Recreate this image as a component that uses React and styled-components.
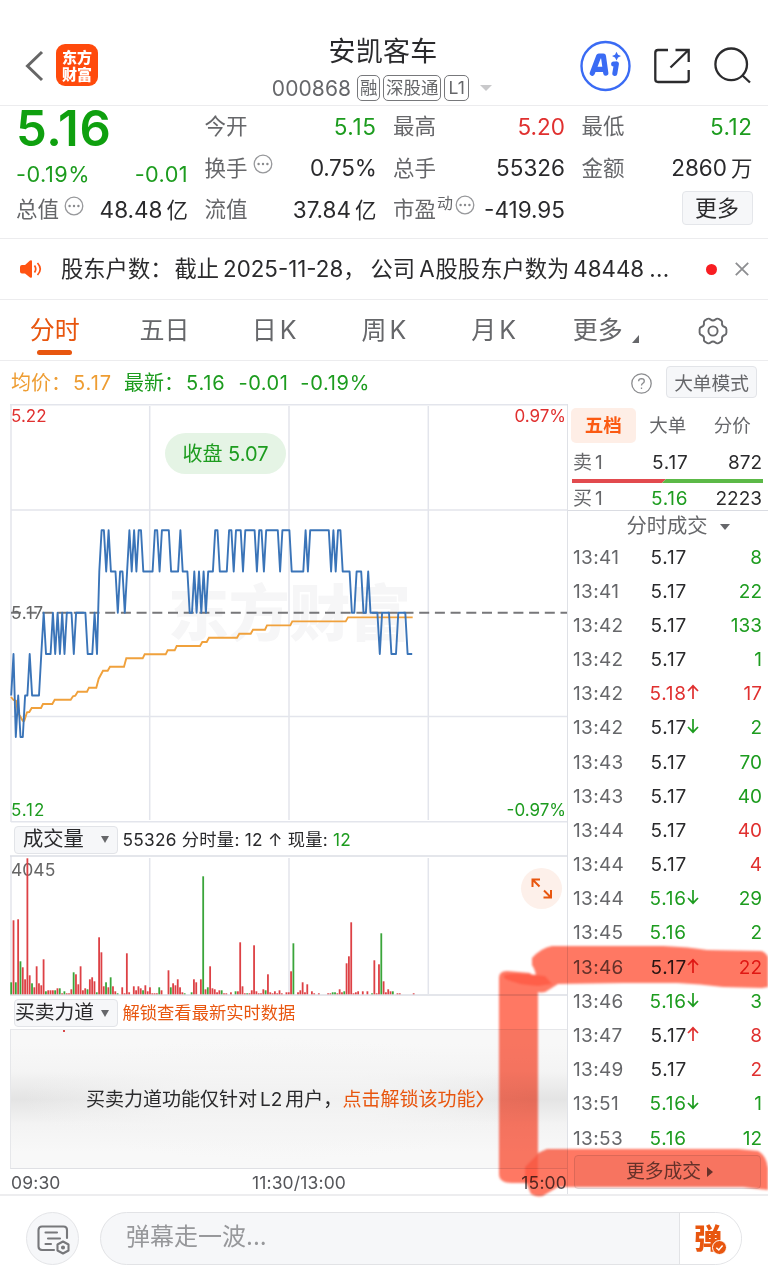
import React from "react";
import styled, { createGlobalStyle } from "styled-components";

const C = {
  green: "#1d9c1f",
  red: "#e0302f",
  orange: "#e8560f",
  amber: "#ee9d33",
  ink: "#2a2a2c",
  gray: "#66676a",
  line: "#ececee",
  grid: "#e3e5ec",
  chip: "#f6f7f9",
};

const GlobalStyle = createGlobalStyle`
  * { box-sizing: border-box; }
  body {
    margin: 0;
    background: #fff;
    color: ${C.ink};
    font-family: Inter, "Noto Sans CJK SC", sans-serif;
    line-height: 1;
  }
`;

const Page = styled.div`
  position: relative;
  width: 768px;
  height: 1273px;
  overflow: hidden;
  background: #fff;
  white-space: nowrap;
`;

const Txt = styled.span`
  color: ${(p) => p.$c || "inherit"};
  font-size: ${(p) => (p.$s ? `${p.$s}px` : "inherit")};
  letter-spacing: ${(p) => p.$ls || 0}px;
  margin-left: ${(p) => p.$ml || 0}px;
  font-weight: ${(p) => p.$w || "inherit"};
`;

/* ---------- header ---------- */
const Header = styled.header`
  display: grid;
  grid-template-columns: 190px 1fr 190px;
  height: 106px;
  border-bottom: 1.5px solid ${C.line};
`;
const HeaderLeft = styled.div`
  display: flex;
  align-items: flex-start;
  padding: 44px 0 0 23px;
  gap: 11px;
`;
const Logo = styled.div`
  display: flex;
  flex-direction: column;
  align-items: center;
  width: 42px;
  height: 42px;
  border-radius: 9px;
  background: #ff4a0c;
  color: #fff;
  font: 900 15px/17px "Noto Sans CJK SC", sans-serif;
  padding-top: 4px;
`;
const HeaderMid = styled.div`
  display: flex;
  flex-direction: column;
  align-items: center;
  padding-top: 37px;
`;
const Title = styled.div`
  font-size: 27px;
  line-height: 30px;
  letter-spacing: 0.2px;
  margin-left: -2px;
`;
const SubLine = styled.div`
  display: flex;
  align-items: center;
  height: 26px;
  margin-top: 8px;
  margin-left: -4px;
  color: ${C.gray};
`;
const Tag = styled.span`
  height: 26px;
  line-height: 23px;
  width: ${(p) => p.$w}px;
  text-align: center;
  border: 1.3px solid #77787b;
  border-radius: 5px;
  font-size: 17.5px;
  margin-left: ${(p) => p.$ml}px;
`;
const DownTri = styled.i`
  width: 0;
  height: 0;
  margin-left: ${(p) => p.$ml || 0}px;
  border: ${(p) => p.$r}px solid transparent;
  border-top: ${(p) => p.$h}px solid ${(p) => p.$c};
  border-bottom: 0;
`;
const HeaderRight = styled.div`
  display: flex;
  align-items: flex-start;
  padding-top: 40px;
`;

/* ---------- quote ---------- */
const Quote = styled.section`
  display: grid;
  grid-template-columns: 172px 172px 172px 171px;
  column-gap: 16.5px;
  padding: 0 15px 0 16px;
  height: 133px;
  border-bottom: 1.5px solid ${C.line};
`;
const QuoteCol = styled.div`
  display: flex;
  flex-direction: column;
`;
const Price = styled.div`
  height: 47px;
  line-height: 45px;
  font-size: 49px;
  font-weight: 600;
  letter-spacing: 0.6px;
  color: #0fa00f;
`;
const Cell = styled.div`
  display: flex;
  justify-content: space-between;
  align-items: center;
  height: ${(p) => p.$h || 41.5}px;
  font-size: 22.5px;
  color: ${(p) => p.$c || C.ink};
`;
const Label = styled.span`
  display: flex;
  align-items: center;
  color: ${C.gray};
  font-size: 21.5px;
  gap: 5px;
`;
const Sup = styled.span`
  font-size: 16px;
  margin: -13px -3px 0 -4px;
`;
const MoreBtn = styled.button`
  width: 71px;
  height: 34px;
  margin: 2px 0 0 auto;
  padding: 0;
  border: 1.5px solid #e4e6ea;
  border-radius: 4px;
  background: ${C.chip};
  color: ${C.ink};
  font: 22px/30px Inter, "Noto Sans CJK SC", sans-serif;
`;

/* ---------- notice ---------- */
const Notice = styled.section`
  display: flex;
  align-items: center;
  height: 61px;
  padding-left: 19px;
  border-bottom: 1.5px solid ${C.line};
  font-size: 22.3px;
`;
const NoticeText = styled.div`
  width: 625px;
  margin-left: 18px;
`;
const RedDot = styled.i`
  width: 11px;
  height: 11px;
  border-radius: 50%;
  background: #f81d22;
  margin: 0 18px 0 20px;
`;

/* ---------- tabs ---------- */
const Tabs = styled.nav`
  display: grid;
  grid-template-columns: repeat(7, 109.7px);
  height: 61px;
  border-bottom: 1.5px solid ${C.line};
`;
const Tab = styled.div`
  display: flex;
  flex-direction: column;
  align-items: center;
  padding-top: 16.5px;
  font-size: 25px;
  line-height: 27px;
  color: ${(p) => (p.$on ? C.orange : C.gray)};
  &::after {
    content: "";
    display: ${(p) => (p.$on ? "block" : "none")};
    width: 35px;
    height: 5px;
    border-radius: 3px;
    margin-top: 6.5px;
    background: ${C.orange};
  }
`;
const TabRow = styled.div`
  display: flex;
  gap: 9px;
  align-items: flex-end;
  margin-left: 5px;
`;

/* ---------- info ---------- */
const Info = styled.section`
  display: flex;
  align-items: center;
  height: 43px;
  padding: 1px 11px 0;
  font-size: 20px;
  color: ${C.green};
`;
const ModeBtn = styled.button`
  width: 91px;
  height: 32px;
  margin: -2px 0 0 14px;
  padding: 0;
  border: 1.5px solid #e2e4e8;
  border-radius: 4px;
  background: ${C.chip};
  color: ${C.gray};
  font: 18.7px/28px "Noto Sans CJK SC", sans-serif;
`;
const Spacer = styled.div`
  flex: 1;
`;

/* ---------- body ---------- */
const Body = styled.main`
  display: flex;
  height: 792px;
  border-bottom: 2px solid #ededef;
`;
const ChartCol = styled.div`
  display: flex;
  flex-direction: column;
  width: 568px;
  padding-left: 10px;
  border-right: 1px solid #dfe1e6;
`;
const ChartBox = styled.div`
  position: relative;
  height: ${(p) => p.$h}px;
  svg { display: block; }
`;
const ClosePill = styled.div`
  position: absolute;
  left: 155px;
  top: 29px;
  width: 121px;
  height: 41px;
  border-radius: 21px;
  background: #e5f4e5;
  color: ${C.green};
  font-size: 20px;
  line-height: 42px;
  text-align: center;
`;
const ExpandBtn = styled.div`
  position: absolute;
  left: 511px;
  top: 13px;
  width: 41px;
  height: 41px;
  border-radius: 50%;
  background: #fdf0ea;
`;
const SubHead = styled.div`
  display: flex;
  align-items: center;
  height: ${(p) => p.$h}px;
  padding: 1px 0 0 4px;
  font-size: 17.3px;
`;
const Picker = styled.div`
  display: flex;
  align-items: center;
  justify-content: space-between;
  width: 104px;
  height: 28px;
  padding: 0 8px 0 ${(p) => p.$pl}px;
  margin-right: 4.5px;
  border: 1.5px solid #e2e4e8;
  border-radius: 4px;
  background: ${C.chip};
  font-size: ${(p) => p.$s}px;
`;
const LockPanel = styled.div`
  position: relative;
  display: flex;
  align-items: center;
  height: 140px;
  padding-left: 75px;
  border: 1px solid #e6e7ea;
  border-right: 0;
  border-bottom: 1.5px solid #dfe0e4;
  font-size: 19px;
  background:
    radial-gradient(ellipse 46% 45% at 48% 50%, rgba(245, 245, 245, 0.75) 45%, rgba(245, 245, 245, 0) 100%),
    linear-gradient(#f8f8f8 10%, #f4f4f4 30%, #e4e4e4 50%, #f3f3f3 68%, #f8f8f8 88%);
  &::before {
    content: "";
    position: absolute;
    left: 52px;
    top: 0;
    width: 2px;
    height: 2px;
    background: #d8484a;
  }
`;
const Axis = styled.div`
  display: grid;
  grid-template-columns: 1fr 1fr 1fr;
  height: 25px;
  align-items: center;
  padding: 3px 0 0 1px;
  font-size: 17.5px;
  letter-spacing: 0.15px;
  color: #55565a;
  span:nth-child(2) { text-align: center; padding-left: 20px; }
  span:nth-child(3) { text-align: right; }
`;

/* ---------- order panel ---------- */
const Side = styled.aside`
  width: 200px;
  display: flex;
  flex-direction: column;
`;
const SideTabs = styled.div`
  display: flex;
  align-items: center;
  height: 42px;
  padding-left: 3px;
`;
const SideTab = styled.div`
  width: 64.5px;
  height: 35px;
  line-height: 35px;
  text-align: center;
  border-radius: 5px;
  font-size: 18.5px;
  font-weight: ${(p) => (p.$on ? 700 : 400)};
  color: ${(p) => (p.$on ? "#fb5a12" : C.gray)};
  background: ${(p) => (p.$on ? "#feeee6" : "transparent")};
`;
const Row = styled.div`
  display: grid;
  grid-template-columns: 77px 60px 1fr;
  align-items: center;
  height: ${(p) => p.$h}px;
  padding: ${(p) => p.$pt || 0}px 6px 0 5px;
  font-size: 19px;
`;
const Cellr = styled.span`
  color: ${(p) => p.$c || C.ink};
  text-align: ${(p) => (p.$r ? "right" : "left")};
  margin-left: ${(p) => p.$ml || 0}px;
  letter-spacing: ${(p) => p.$ls || 0}px;
`;
const SideTitle = styled.div`
  display: flex;
  align-items: center;
  height: 30px;
  padding: 2px 0 0 58.5px;
  font-size: 20.3px;
  color: ${C.gray};
  border-top: 1.5px solid #dadce2;
`;
const MoreDeals = styled.div`
  display: flex;
  align-items: center;
  justify-content: center;
  gap: 6px;
  width: 187px;
  height: 34px;
  margin: 0 0 0 6px;
  padding-left: 4px;
  border: 1px solid #dcdcdf;
  border-radius: 4px;
  background: #f7f7f8;
  font-size: 18.8px;
  color: ${C.gray};
`;

/* ---------- bottom bar ---------- */
const Bottom = styled.footer`
  display: flex;
  align-items: center;
  height: 77px;
  padding: 8px 0 0 26px;
  gap: 21px;
`;
const RoundBtn = styled.div`
  width: 53px;
  height: 53px;
  border-radius: 50%;
  border: 1.5px solid #e4e5e8;
  background: ${C.chip};
`;
const InputBox = styled.div`
  display: flex;
  width: 642px;
  height: 53px;
  border: 1.5px solid #e2e3e6;
  border-radius: 27px;
  background: ${C.chip};
  overflow: hidden;
  font-size: 24px;
  line-height: 47px;
  color: #97989b;
`;
const Placeholder = styled.div`
  flex: 1;
  padding-left: 25px;
`;
const SendBox = styled.div`
  position: relative;
  width: 62px;
  border-left: 1.5px solid #e2e3e6;
  background: #fff;
  color: ${C.orange};
  font: 900 28px/49px "Noto Sans CJK SC", sans-serif;
  padding-left: 14px;
  svg { position: absolute; left: 32px; top: 27px; }
`;
const Marker = styled.svg`
  position: absolute;
  left: 490px;
  top: 930px;
  mix-blend-mode: multiply;
`;

/* ---------- data ---------- */
const LEVEL_Y = { 4: 737, 5: 695.5, 6: 654, 7: 612.7, 8: 571.5, 9: 530.3 };
/* one "level x minutes" run per token */
const RUNS =
  "5 6 4 5 4x2 5x2 6 5x4 6 7 6x3 7 6 7 6 7 6 7x3 6 7x5 6x3 7 6 8 9x2 8 9 8x3 7 8x2 7 8 9 8 9 8 9x2 8x5 9x2 8 9x4 8x4 9 8x3 7x2 8 7 8 7 8 7 8x3 9x2 8x4 9x2 8 9x3 8 9x5 8 9x2 8 9x6 8 9x4 8x6 9 8 9x9 8 9 8 9x2 8x4 7x2 8x3 7x2 8 7x4 6 7x4 6x3 7x4 6x3";
const STEP = 2.318;
const pricePoints = RUNS.split(" ")
  .flatMap((t) => {
    const [l, n] = t.split("x");
    return Array(Number(n || 1)).fill(LEVEL_Y[l]);
  })
  .map((y, i) => `${(11.2 + i * STEP).toFixed(1)},${y}`)
  .join(" ");

const AVG =
  "11,697 13.5,700 16,700.7 18,713 20,716 22.7,720.7 24.3,720.7 27,712.3 29.3,712 31.7,708 41,708 43,704 52.3,704 54.7,699.7 70.7,699.7 73,696.3 75.3,695.7 77.7,691.7 87,691.7 89,687.7 96.3,687.7 98.7,678.7 103,670.7 107.7,670.7 110,666.7 124,666.7 126.3,658.3 142.7,658.3 144.7,654.3 165.7,654.3 167.7,650.3 174.7,650.3 176.7,646 200,646 202.3,642 206.7,642 209,637.7 237,637.7 239.3,633.7 250.7,633.7 253,629.7 265,629.7 267,625.4 290.3,625.4 292.3,621.4 345.7,621.4 348,617.4 412.7,617.4";

const VOL =
  "g12 r74 g12 r75 g33 r27 r15 r136 r19 g11 r7 r28 r11 r9 r35 g3 r4 r4 r4 g4 r6 g6 r1 g3 r1 r1 r5 g22 r20 r10 r28 r4 r6 g5 r15 r17 r13 g2 r57 r42 r8 g12 r7 g17 r8 r3 g1 r0 r7 r1 r41 r2 r0 r8 r4 r8 r6 g4 r9 r3 r7 r1 r1 r1 g7 r4 r0 r0 r24 g7 r11 r9 r15 r7 r2 g1 r0 r0 g2 r15 r12 r0 r15 g118 r5 g7 r28 r6 r5 r2 r4 g4 r1 r1 r0 r2 r0 g3 r3 r52 r8 r1 g1 r1 r4 r49 r3 r1 r1 r5 g4 r20 r2 r1 r3 r1 r4 r1 r0 r2 r2 r23 g51 r0 r2 r4 r12 r2 r10 r0 r3 r1 r0 r1 r0 r0 r0 r1 r1 g2 g2 r1 r5 r2 g3 r31 r38 r72 r1 r2 r3 r0 r3 r0 r3 r0 g1 r34 r1 r30 g61 r13 r2 r5 r3 g3 r0 r1 r1 r0 r0 r0 r0 r0 r1";

const DEALS = [
  ["13:41", "5.17", "", "8", "g"],
  ["13:41", "5.17", "", "22", "g"],
  ["13:42", "5.17", "", "133", "g"],
  ["13:42", "5.17", "", "1", "g"],
  ["13:42", "5.18", "u", "17", "r", "r"],
  ["13:42", "5.17", "d", "2", "g"],
  ["13:43", "5.17", "", "70", "g"],
  ["13:43", "5.17", "", "40", "g"],
  ["13:44", "5.17", "", "40", "r"],
  ["13:44", "5.17", "", "4", "r"],
  ["13:44", "5.16", "d", "29", "g", "g"],
  ["13:45", "5.16", "", "2", "g", "g"],
  ["13:46", "5.17", "u", "22", "r"],
  ["13:46", "5.16", "d", "3", "g", "g"],
  ["13:47", "5.17", "u", "8", "r"],
  ["13:49", "5.17", "", "2", "r"],
  ["13:51", "5.16", "d", "1", "g", "g"],
  ["13:53", "5.16", "", "12", "g", "g"],
];
const tone = { g: C.green, r: C.red };

const MoreDots = () => (
  <svg width="20" height="20" style={{ marginTop: -9 }} viewBox="0 0 20 20" fill="none">
    <circle cx="10" cy="10" r="8.8" stroke="#97989b" strokeWidth="1.3" />
    <g fill="#88898c">
      <circle cx="5.6" cy="10" r="1.2" />
      <circle cx="10" cy="10" r="1.2" />
      <circle cx="14.4" cy="10" r="1.2" />
    </g>
  </svg>
);

const Arrow = ({ dir }) => (
  <svg width="12" height="16" viewBox="0 0 12 16" fill="none" stroke={dir === "u" ? C.red : C.green} strokeWidth="1.7">
    {dir === "u" ? <path d="M6 15V2M1 7L6 1.8L11 7" /> : <path d="M6 1V14M1 9L6 14.2L11 9" />}
  </svg>
);

const PriceChart = () => (
  <svg width="557" height="419" viewBox="10 404 557 419" fill="none">
    <text x="168" y="636" fontSize="61" fontWeight="900" fill="#f6f6f7" textLength="243" fontFamily="Noto Sans CJK SC">
      东方财富
    </text>
    <g stroke={C.grid} strokeWidth="1.5">
      <path d="M11 405V822M149.7 406V820M289 406V820M428.3 406V820" />
      <path d="M10 404.8H567M11 510H567M11 716.5H567M11 821.8H567" />
    </g>
    <path d="M11 612.8H567" stroke="#77777a" strokeWidth="2" strokeDasharray="10 5.7" />
    <polyline points={AVG} stroke="#f0a13c" strokeWidth="1.9" />
    <polyline points={pricePoints} stroke="#3a74b8" strokeWidth="1.9" strokeLinejoin="round" />
    <g fontSize="17" fontFamily="Inter">
      <text x="11" y="421.5" fill={C.red}>5.22</text>
      <text x="11" y="619" fill="#666" letterSpacing="0.8">5.17</text>
      <text x="11" y="815.5" fill={C.green} letterSpacing="0.9">5.12</text>
      <text x="566" y="421.5" fill={C.red} textAnchor="end">0.97%</text>
      <text x="566" y="815.5" fill={C.green} textAnchor="end">-0.97%</text>
    </g>
  </svg>
);

const VolumeChart = () => (
  <svg width="557" height="141" viewBox="10 855 557 141">
    <g stroke={C.grid} strokeWidth="1.5">
      <path d="M11 856V995M149.7 858V994M289 858V994M428.3 858V994" />
      <path d="M10 856H567M10 995H567" stroke="#dcdee5" />
    </g>
    <text x="11" y="875.5" fontSize="17.5" fill="#666" fontFamily="Inter">4045</text>
    {VOL.split(" ").map((t, i) => {
      const h = Number(t.slice(1));
      return h ? (
        <rect
          key={i}
          x={10.3 + i * 2.313}
          y={994.3 - h}
          width="1.8"
          height={h}
          fill={t[0] === "g" ? "#3aa53a" : "#dd4145"}
        />
      ) : null;
    })}
  </svg>
);

export default function App() {
  return (
    <Page>
      <GlobalStyle />
      <Header>
        <HeaderLeft>
          <svg width="22" height="42" fill="none" stroke="#666" strokeWidth="3">
            <path d="M19 8L4.5 22L19 36" />
          </svg>
          <Logo><span>东方</span><span>财富</span></Logo>
        </HeaderLeft>
        <HeaderMid>
          <Title>安凯客车</Title>
          <SubLine>
            <Txt $s={21} $ls={0.1}>000868</Txt>
            <Tag $w={23} $ml={6}>融</Tag>
            <Tag $w={58} $ml={3}>深股通</Tag>
            <Tag $w={25} $ml={3}>L1</Tag>
            <DownTri $ml={11} $r={6} $h={6.5} $c="#c9c9cb" />
          </SubLine>
        </HeaderMid>
        <HeaderRight>
          <svg width="190" height="52" viewBox="578 40 190 52" fill="none">
            <circle cx="605.5" cy="66" r="24" stroke="#3a6bf4" strokeWidth="2.4" />
            <g stroke="#3a6bf4" strokeLinejoin="round" strokeLinecap="round">
              <path d="M592.3 73.2L598.8 56H603.4L605.8 73.2M595 69.3H603" strokeWidth="5.2" />
              <path d="M616.4 64L614.8 73.5M613.6 64H616" strokeWidth="5" />
            </g>
            <path d="M616.5 51.8L618 54.7L621 56L618 57.4L616.5 60.4L615 57.4L612 56L615 54.7Z" fill="#3a6bf4" />
            <g stroke="#2b2b2d" strokeWidth="2.3">
              <path d="M668 50H658Q655.3 50 655.3 52.7V79.3Q655.3 82 658 82H686Q688.7 82 688.7 79.3V70" />
              <path d="M675.5 50H688.7V62M688 50.5L670.5 67.5" />
              <circle cx="731.2" cy="64.3" r="15.8" />
              <path d="M742.5 75.5L750 82.5" />
            </g>
          </svg>
        </HeaderRight>
      </Header>

      <Quote>
        <QuoteCol>
          <Price>5.16</Price>
          <Cell $h={43} $c={C.green}>
            <Txt $s={21.7} $ls={0.5}>-0.19%</Txt>
            <Txt $s={21.7} $ls={0.4}>-0.01</Txt>
          </Cell>
          <Cell $h={28}>
            <Label>总值<MoreDots /></Label>
            <span>48.48<Txt $s={21.5} $ml={4}>亿</Txt></span>
          </Cell>
        </QuoteCol>
        <QuoteCol>
          <Cell>
            <Label>今开</Label><Txt $c={C.green} $ls={0.6}>5.15</Txt>
          </Cell>
          <Cell>
            <Label>换手<MoreDots /></Label><Txt $ls={-0.3}>0.75%</Txt>
          </Cell>
          <Cell>
            <Label>流值</Label><span>37.84<Txt $s={21.5} $ml={4}>亿</Txt></span>
          </Cell>
        </QuoteCol>
        <QuoteCol>
          <Cell>
            <Label>最高</Label><Txt $c={C.red}>5.20</Txt>
          </Cell>
          <Cell>
            <Label>总手</Label><span>55326</span>
          </Cell>
          <Cell>
            <Label>市盈<Sup>动</Sup><MoreDots /></Label><span>-419.95</span>
          </Cell>
        </QuoteCol>
        <QuoteCol>
          <Cell>
            <Label>最低</Label><Txt $c={C.green} $ls={0.5}>5.12</Txt>
          </Cell>
          <Cell>
            <Label>金额</Label><span>2860<Txt $s={21.5} $ml={4}>万</Txt></span>
          </Cell>
          <MoreBtn>更多</MoreBtn>
        </QuoteCol>
      </Quote>

      <Notice>
        <svg width="24" height="20" viewBox="0 0 24 20" fill="none">
          <path d="M1 8Q1 6 3 6H6L11 1.5Q13 .5 13 2.5V17.5Q13 19.5 11 18.5L6 14.5H3Q1 14.5 1 12.5Z" fill="#ff5312" />
          <path d="M15.5 6.5Q18 10 15.5 13.5M18.5 4Q24 10 18.5 16" stroke="#ff5312" strokeWidth="1.7" />
        </svg>
        <NoticeText>
          股东户数：<Txt $ml={2}>截止</Txt><Txt $ml={4}>2025-11-28</Txt>，<Txt $ml={5}>公司</Txt><Txt $ml={4}>A</Txt>
          <Txt $ml={1}>股股东户数为</Txt><Txt $ml={4}>48448</Txt><Txt $ml={5} $ls={0.4}>...</Txt>
        </NoticeText>
        <RedDot />
        <svg width="14" height="14" stroke="#8d8e91" strokeWidth="1.8"><path d="M.8 .8L13.2 13.2M13.2 .8L.8 13.2" /></svg>
      </Notice>

      <Tabs>
        <Tab $on>分时</Tab>
        <Tab>五日</Tab>
        <Tab><span>日<Txt $ml={3}>K</Txt></span></Tab>
        <Tab><span>周<Txt $ml={3}>K</Txt></span></Tab>
        <Tab><span>月<Txt $ml={3}>K</Txt></span></Tab>
        <Tab>
          <TabRow>
            更多
            <svg width="7" height="10" fill="#66676a"><path d="M7 1V9H0Z" /></svg>
          </TabRow>
        </Tab>
        <Tab>
          <svg width="30" height="28" viewBox="-15 -14 30 28" fill="none" stroke="#66676a" strokeWidth="1.9" strokeLinejoin="round">
            <path d="M-5.5 -12.2Q-3.5 -12.8 -2.4 -11.4Q0 -9.4 2.4 -11.4Q3.5 -12.8 5.5 -12.2L8.4 -10.4Q9.4 -9.4 9 -7.6Q8.8 -4.8 11.8 -4Q13.4 -3.4 13.4 -1.8V1.8Q13.4 3.4 11.8 4Q8.8 4.8 9 7.6Q9.4 9.4 8.4 10.4L5.5 12.2Q3.5 12.8 2.4 11.4Q0 9.4 -2.4 11.4Q-3.5 12.8 -5.5 12.2L-8.4 10.4Q-9.4 9.4 -9 7.6Q-8.8 4.8 -11.8 4Q-13.4 3.4 -13.4 1.8V-1.8Q-13.4 -3.4 -11.8 -4Q-8.8 -4.8 -9 -7.6Q-9.4 -9.4 -8.4 -10.4Z" />
            <circle r="4.6" />
          </svg>
        </Tab>
      </Tabs>

      <Info>
        <Txt $c={C.amber}>均价：</Txt>
        <Txt $c={C.amber} $ml={2} $ls={1}>5.17</Txt>
        <Txt $ml={12}>最新：</Txt>
        <Txt $ml={2} $ls={0.8}>5.16</Txt>
        <Txt $ml={13} $ls={0.5}>-0.01</Txt>
        <Txt $ml={12} $ls={0.7}>-0.19%</Txt>
        <Spacer />
        <svg width="21" height="21" viewBox="0 0 21 21" fill="none" stroke="#8b8c8f" strokeWidth="1.3">
          <circle cx="10.5" cy="10.5" r="9.7" />
          <path d="M7.6 8.3Q7.7 5.6 10.5 5.6Q13.3 5.7 13.3 8.1Q13.2 9.6 11.6 10.5Q10.5 11.2 10.5 12.6M10.5 14.4V16" />
        </svg>
        <ModeBtn>大单模式</ModeBtn>
      </Info>

      <Body>
        <ChartCol>
          <ChartBox $h={419}>
            <PriceChart />
            <ClosePill>收盘 5.07</ClosePill>
          </ChartBox>
          <SubHead $h={32}>
            <Picker $pl={8} $s={20.3}>
              成交量<DownTri $r={4.5} $h={7.5} $c="#66676a" />
            </Picker>
            <Txt $ls={0.25}>55326 分时量: 12 ↑ 现量: <Txt $c={C.green} $ls={0.25}>12</Txt></Txt>
          </SubHead>
          <ChartBox $h={141}>
            <VolumeChart />
            <ExpandBtn>
              <svg width="41" height="41" fill="none" stroke={C.orange} strokeWidth="2">
                <path d="M11.5 19V11.5H19M12 12L18.5 18.5M22.5 29.5H30V22M29.5 29L23 22.5" />
              </svg>
            </ExpandBtn>
          </ChartBox>
          <SubHead $h={33}>
            <Picker $pl={0} $s={19.8}>
              买卖力道<DownTri $r={4.5} $h={7.5} $c="#66676a" />
            </Picker>
            <Txt $c={C.orange}>解锁查看最新实时数据</Txt>
          </SubHead>
          <LockPanel>
            买卖力道功能仅针对<Txt $ml={3}>L2</Txt><Txt $ml={3}>用户，</Txt>
            <Txt $c={C.orange}>点击解锁该功能</Txt>
            <svg width="9" height="18" fill="none" stroke={C.orange} strokeWidth="1.6"><path d="M2 1L7.5 9L2 17" /></svg>
          </LockPanel>
          <Axis><span>09:30</span><span>11:30/13:00</span><span>15:00</span></Axis>
        </ChartCol>

        <Side>
          <SideTabs>
            <SideTab $on>五档</SideTab>
            <SideTab>大单</SideTab>
            <SideTab>分价</SideTab>
          </SideTabs>
          <Row $h={33}>
            <Cellr $c={C.gray}>卖<Txt $ml={3}>1</Txt></Cellr>
            <Cellr $ml={2} $ls={0.8}>5.17</Cellr>
            <Cellr $r>872</Cellr>
          </Row>
          <svg width="200" height="4"><path d="M4 0H98L94 4H4Z" fill="#e24a4e" /><path d="M98 0H195V4H94Z" fill="#5cb947" /></svg>
          <Row $h={27} $pt={3}>
            <Cellr $c={C.gray}>买<Txt $ml={3}>1</Txt></Cellr>
            <Cellr $ml={1} $ls={0.7} $c={C.green}>5.16</Cellr>
            <Cellr $r>2223</Cellr>
          </Row>
          <SideTitle>
            分时成交<DownTri $ml={12} $r={5} $h={6} $c="#66676a" />
          </SideTitle>
          {DEALS.map(([time, price, dir, n, nc, pc], i) => (
            <Row key={i} $h={34.18}>
              <Cellr $c={C.gray} $ls={0.35}>{time}</Cellr>
              <Cellr $c={tone[pc]} $ls={pc ? 0.7 : 0.8} $ml={pc ? -0.5 : 0.5}>
                {price}
                {dir && <Arrow dir={dir} />}
              </Cellr>
              <Cellr $r $c={tone[nc]}>{n}</Cellr>
            </Row>
          ))}
          <MoreDeals>
            更多成交
            <svg width="6" height="10" fill="#66676a"><path d="M0 0L6 5L0 10Z" /></svg>
          </MoreDeals>
        </Side>
      </Body>

      <Bottom>
        <RoundBtn>
          <svg width="50" height="50" viewBox="1 1 50 50" fill="none" stroke="#77787b" strokeWidth="2.1" strokeLinecap="round">
            <path d="M28 38H16Q12.5 38 12.5 34.5V18Q12.5 14.5 16 14.5H37.5Q41 14.5 41 18V26" />
            <path d="M19.5 20.5H31M22 26.5H34M19.5 32H25" />
            <path d="M37 29.5L42.5 32.5V38.5L37 41.5L31.5 38.5V32.5Z" strokeLinejoin="round" />
            <circle cx="37" cy="35.5" r="1" />
          </svg>
        </RoundBtn>
        <InputBox>
          <Placeholder>弹幕走一波...</Placeholder>
          <SendBox>
            弹
            <svg width="15" height="15" viewBox="0 0 15 15" fill="none">
              <circle cx="7.5" cy="7.5" r="7" fill={C.orange} stroke="#fff" />
              <path d="M4.3 7.7L6.8 10L10.6 5.5" stroke="#fff" strokeWidth="1.5" />
            </svg>
          </SendBox>
        </InputBox>
      </Bottom>

      <Marker width="278" height="275" viewBox="490 930 278 275">
        <defs>
          <filter id="soft" x="-5%" y="-5%" width="115%" height="110%"><feGaussianBlur stdDeviation="1" /></filter>
        </defs>
        <g filter="url(#soft)" fill="#ff7863">
          <path d="M499 978Q499 971 507 971L530 973L538 983V1160L532 1183H512Q499 1183 499 1174Z" />
          <path d="M532 958Q541 948 552 946H663Q690 947 707 950L760 951Q765 951 768 957V987L762 988L723 987Q700 984 677 983H623L558 984L550 989Q544 994 538 992L535 984Q538 974 532 965Z" />
          <path d="M525 1167Q532 1154 547 1149H738L758 1151Q766 1155 768 1168V1190L743 1187H558L546 1194Q540 1199 531 1194L525 1180Z" />
          <path d="M504 975Q512 972 545 976L552 984L538 986Q515 985 504 978Z" fill="#ff5f49" />
          <path d="M525 1167L538 1154V1180L530 1183H525Z" fill="#ff5f49" />
        </g>
      </Marker>
    </Page>
  );
}
